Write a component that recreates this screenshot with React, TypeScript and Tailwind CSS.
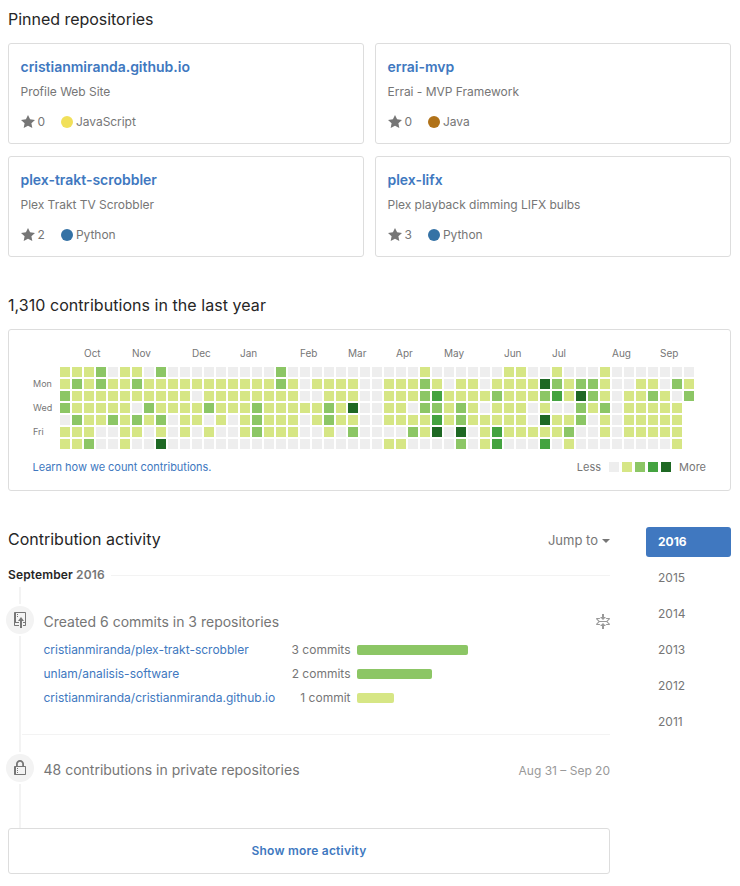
const LEVELS = ["bg-[#eeeeee]", "bg-[#d6e685]", "bg-[#8cc665]", "bg-[#44a340]", "bg-[#1e6823]"];

// One string per weekday, one digit per week (0 = none, 4 = most).
const DAYS = [
  "1112011020000" + "00000200000000" + "0001000000110" + "0100010000000",
  "1212112111111" + "11111210111100" + "1112101101111" + "4212210011021",
  "2111111111101" + "11111110011100" + "1112311112111" + "2314210112102",
  "2111110211112" + "11121111121400" + "1102212101110" + "100212011111",
  "0211212120110" + "10121110121100" + "1111312111110" + "411201011111",
  "1110011010101" + "00121110010200" + "0021404013111" + "112001011111",
  "1120010040000" + "00000000000000" + "1100002013000" + "301000000001",
];

const MONTHS: [string, number][] = [
  ["Oct", 2], ["Nov", 6], ["Dec", 11], ["Jan", 15], ["Feb", 20], ["Mar", 24],
  ["Apr", 28], ["May", 32], ["Jun", 37], ["Jul", 41], ["Aug", 46], ["Sep", 50],
];

const REPOS = [
  { name: "cristianmiranda.github.io", desc: "Profile Web Site", stars: 0, lang: "JavaScript", dot: "bg-[#f1e05a]" },
  { name: "errai-mvp", desc: "Errai - MVP Framework", stars: 0, lang: "Java", dot: "bg-[#b07219]" },
  { name: "plex-trakt-scrobbler", desc: "Plex Trakt TV Scrobbler", stars: 2, lang: "Python", dot: "bg-[#3572a5]" },
  { name: "plex-lifx", desc: "Plex playback dimming LIFX bulbs", stars: 3, lang: "Python", dot: "bg-[#3572a5]" },
];

const COMMITS = [
  { repo: "cristianmiranda/plex-trakt-scrobbler", count: "3 commits", bar: "w-[111px] bg-[#8cc665]" },
  { repo: "unlam/analisis-software", count: "2 commits", bar: "w-[75px] bg-[#8cc665]" },
  { repo: "cristianmiranda/cristianmiranda.github.io", count: "1 commit", bar: "w-[37px] bg-[#d6e685]" },
];

const StarIcon = () => (
  <svg width="14" height="16" viewBox="0 0 14 16" fill="currentColor">
    <path d="M14 6l-4.9-.64L7 1 4.9 5.36 0 6l3.6 3.26L2.67 14 7 11.67 11.33 14l-.93-4.74z" />
  </svg>
);
const PushIcon = () => (
  <svg width="12" height="16" viewBox="0 0 12 16" fill="currentColor" fillRule="evenodd">
    <path d="M4 3H3V2h1v1zM3 5h1V4H3v1zm4 0L4 9h2v7h2V9h2L7 5zm4-5H1C.45 0 0 .45 0 1v12c0 .55.45 1 1 1h4v-1H1v-2h4v-1H2V1h9.02L11 10H9v1h2v2H9v1h2c.55 0 1-.45 1-1V1c0-.55-.45-1-1-1z" />
  </svg>
);
const LockIcon = () => (
  <svg width="12" height="16" viewBox="0 0 12 16" fill="currentColor" fillRule="evenodd">
    <path d="M4 13H3v-1h1v1zm8-6v7c0 .55-.45 1-1 1H1c-.55 0-1-.45-1-1V7c0-.55.45-1 1-1h1V4c0-2.2 1.8-4 4-4s4 1.8 4 4v2h1c.55 0 1 .45 1 1zM3.8 6h4.41V4c0-1.22-.98-2.2-2.2-2.2-1.22 0-2.2.98-2.2 2.2v2H3.8zM11 7H2v7h9V7zM4 8H3v1h1V8zm0 2H3v1h1v-1z" />
  </svg>
);
const FoldIcon = () => (
  <svg width="14" height="16" viewBox="0 0 14 16" fill="currentColor" fillRule="evenodd">
    <path d="M7 9l3 3H8v3H6v-3H4l3-3zm3-6H8V0H6v3H4l3 3 3-3zm4 2c0-.55-.45-1-1-1h-2.5l-1 1h3l-2 2h-7l-2-2h3l-1-1H1c-.55 0-1 .45-1 1l2.5 2.5L0 10c0 .55.45 1 1 1h2.5l1-1h-3l2-2h7l2 2h-3l1 1H13c.55 0 1-.45 1-1l-2.5-2.5L14 5z" />
  </svg>
);

function Calendar() {
  return (
    <div className="mt-3 h-[162px] rounded-[3px] border border-[#dddddd] pt-[17px]">
      <div className="ml-[51px] grid h-3 grid-cols-[repeat(53,10px)] gap-x-0.5 text-[10px] leading-3 text-[#767676]">
        {MONTHS.map(([name, week]) => (
          <span key={name} className="w-0 whitespace-nowrap" style={{ gridColumnStart: week + 1 }}>{name}</span>
        ))}
      </div>
      <div className="mt-2 flex">
        <div className="ml-6 mt-[11px] flex w-[27px] flex-col gap-3 text-[9px] leading-3 text-[#767676]">
          <span>Mon</span>
          <span>Wed</span>
          <span>Fri</span>
        </div>
        <div className="flex flex-col gap-0.5">
          {DAYS.map((row, d) => (
            <div key={d} className="flex gap-0.5">
              {row.split("").map((level, w) => (
                <i key={w} className={`size-2.5 ${LEVELS[Number(level)]}`} />
              ))}
            </div>
          ))}
        </div>
      </div>
      <div className="mt-2.5 flex items-center justify-between pl-[23.5px] pr-6 text-[11px] leading-4">
        <a className="tracking-[-0.04px] text-[#4078c0]">Learn how we count contributions.</a>
        <div className="flex items-center text-[#767676]">
          Less
          <div className="ml-2 mr-2 flex gap-[3px]">
            {LEVELS.map((c) => <i key={c} className={`size-2.5 ${c}`} />)}
          </div>
          More
        </div>
      </div>
    </div>
  );
}

export default function App() {
  return (
    <div className="h-[886px] w-[740px] overflow-hidden bg-white pl-2 pr-[9px] pt-[7px] font-['Inter',sans-serif] text-[#262626]">
      <h2 className="text-base leading-6 tracking-[-0.03px]">Pinned repositories</h2>
      <div className="mt-3 grid grid-cols-2 gap-x-[11px] gap-y-3">
        {REPOS.map((r) => (
          <div key={r.name} className="h-[101px] rounded-[3px] border border-[#dddddd] pl-[11.5px] pt-[13px]">
            <div className="text-sm font-semibold leading-5 tracking-[-0.02px] text-[#4078c0]">{r.name}</div>
            <div className="mt-[7px] text-xs leading-4 tracking-[-0.02px] text-[#767676]">{r.desc}</div>
            <div className="mt-3.5 flex h-4 items-center text-xs leading-4 text-[#767676]">
              <StarIcon />
              <span className="ml-[3px] w-2">{r.stars}</span>
              <i className={`ml-[15.5px] mr-[3px] size-3 rounded-full ${r.dot}`} />
              <span className="tracking-[-0.05px]">{r.lang}</span>
            </div>
          </div>
        ))}
      </div>

      <h2 className="mt-9 text-base leading-6 tracking-[0.05px]">1,310 contributions in the last year</h2>
      <Calendar />

      <div className="mt-9 flex justify-between">
        <section className="w-[602px]">
          <div className="flex h-6 items-center justify-between">
            <h2 className="text-base leading-6">Contribution activity</h2>
            <span className="mt-1 flex items-center gap-1 text-[13px] text-[#767676]">
              Jump to
              <i className="size-0 border-x-4 border-t-4 border-x-transparent border-t-[#767676]" />
            </span>
          </div>
          <div className="mt-4 flex h-4 items-center gap-1.5 text-xs font-semibold tracking-[0.13px]">
            <span>September <span className="text-[#767676]">2016</span></span>
            <i className="mt-px h-px grow bg-[#f3f3f3]" />
          </div>
          <div className="ml-[11px] mt-1 h-[17px] w-0.5 bg-[#f3f3f3]" />
          <div className="mt-0.5 flex h-[146px]">
            <div className="-ml-0.5 flex w-7 flex-col items-center">
              <div className="flex size-7 shrink-0 items-center justify-center rounded-full bg-[#f3f3f3] text-[#767676]"><PushIcon /></div>
              <div className="mt-0.5 w-0.5 grow bg-[#f3f3f3]" />
            </div>
            <div className="-ml-3 grow">
              <div className="h-[129px] border-b border-[#f3f3f3] pl-[21.5px] pt-1.5 text-[#767676]">
                <div className="flex h-5 items-center justify-between">
                  <span className="text-sm">Created 6 commits in 3 repositories</span>
                  <span className="text-[#999999]"><FoldIcon /></span>
                </div>
                <div className="mt-1.5">
                  {COMMITS.map((c) => (
                    <div key={c.repo} className="flex h-6 items-center text-xs">
                      <a className="w-[236.5px] whitespace-nowrap text-[#4078c0]">{c.repo}</a>
                      <span className="w-[70.5px] text-right">{c.count}</span>
                      <i className={`ml-[6.5px] h-2.5 rounded-[2px] ${c.bar}`} />
                    </div>
                  ))}
                </div>
              </div>
            </div>
          </div>
          <div className="mt-0.5 flex h-[74px]">
            <div className="-ml-0.5 flex w-7 flex-col items-center">
              <div className="flex size-7 shrink-0 items-center justify-center rounded-full bg-[#f3f3f3] text-[#767676]"><LockIcon /></div>
              <div className="mt-0.5 w-0.5 grow bg-[#f3f3f3]" />
            </div>
            <div className="mt-1.5 flex h-5 grow items-center justify-between pl-[9.5px] text-sm text-[#767676]">
              48 contributions in private repositories
              <span className="mt-0.5 text-xs text-[#999999]">Aug 31 – Sep 20</span>
            </div>
          </div>
          <div className="flex h-[46px] items-center justify-center rounded-[3px] border border-[#dddddd] text-xs font-semibold tracking-[0.22px] text-[#4078c0]">
            Show more activity
          </div>
        </section>
        <nav className="flex w-[85px] flex-col gap-1.5 text-xs text-[#767676]">
          <span className="flex h-[30px] items-center rounded-[3px] bg-[#4078c0] pl-3 font-bold text-white">2016</span>
          {[2015, 2014, 2013, 2012, 2011].map((y) => (
            <span key={y} className="flex h-[30px] items-center pl-3">{y}</span>
          ))}
        </nav>
      </div>
    </div>
  );
}
